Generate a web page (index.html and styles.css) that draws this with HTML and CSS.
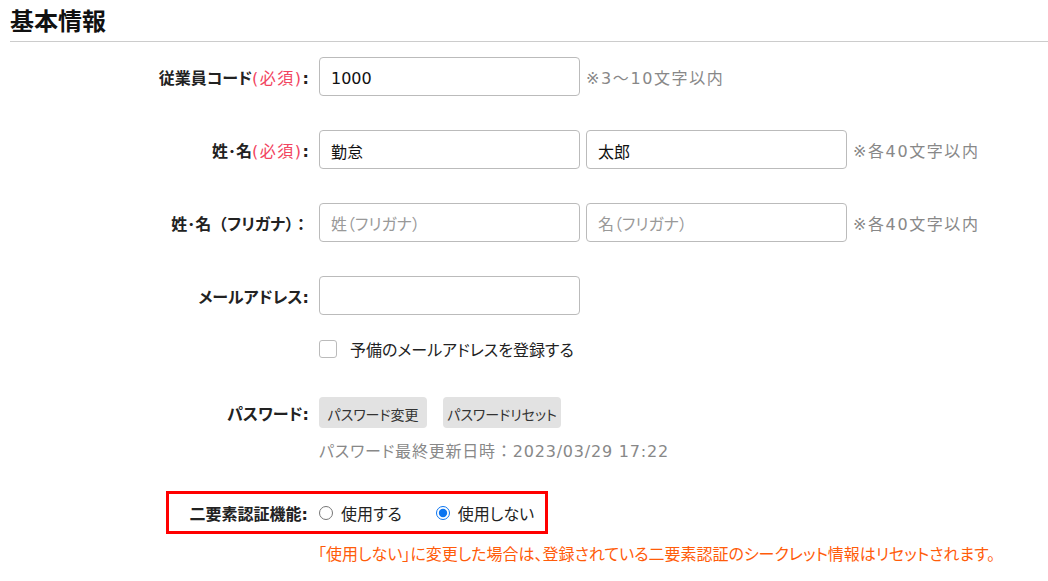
FILE: index.html
```html
<!DOCTYPE html>
<html lang="ja">
<head>
<meta charset="utf-8">
<title>基本情報</title>
<link rel="stylesheet" href="styles.css">
</head>
<body>
<section class="section">
  <h2 class="section-title">基本情報</h2>
  <form class="form">
    <div class="row">
      <label class="label">従業員コード<span class="req">(必須)</span>:</label>
      <input class="text-input" type="text" value="1000">
      <span class="hint">※3〜10文字以内</span>
    </div>
    <div class="row">
      <label class="label">姓･名<span class="req">(必須)</span>:</label>
      <input class="text-input" type="text" value="勤怠">
      <input class="text-input" type="text" value="太郎">
      <span class="hint">※各40文字以内</span>
    </div>
    <div class="row">
      <label class="label">姓･名<span class="full">（</span>フリガナ<span class="full">）：</span></label>
      <input class="text-input" type="text" placeholder="姓（フリガナ）">
      <input class="text-input" type="text" placeholder="名（フリガナ）">
      <span class="hint">※各40文字以内</span>
    </div>
    <div class="row row-email">
      <label class="label">メールアドレス:</label>
      <input class="text-input" type="text">
    </div>
    <div class="row row-check">
      <span class="label"></span>
      <label class="check-label"><input class="checkbox" type="checkbox"><span class="txt">予備のメールアドレスを登録する</span></label>
    </div>
    <div class="row row-password">
      <label class="label">パスワード:</label>
      <button class="btn btn-change" type="button">パスワード変更</button>
      <button class="btn btn-reset" type="button">パスワードリセット</button>
    </div>
    <div class="row row-updated">
      <span class="label"></span>
      <span class="updated">パスワード最終更新日時<span class="full">：</span>2023/03/29 17:22</span>
    </div>
    <div class="row row-2fa">
      <div class="highlight">
        <span class="label label-2fa">二要素認証機能:</span>
        <label class="radio-label"><input class="radio" type="radio" name="tfa"><span class="txt">使用する</span></label>
        <label class="radio-label radio-label-2"><input class="radio" type="radio" name="tfa" checked><span class="txt">使用しない</span></label>
      </div>
    </div>
    <div class="row row-warning">
      <span class="label"></span>
      <span class="warning">「使用しない」に変更した場合は、登録されている二要素認証のシークレット情報はリセットされます。</span>
    </div>
  </form>
</section>
</body>
</html>
```
FILE: styles.css
```css
* { box-sizing: border-box; }
html, body {
  margin: 0;
  padding: 0;
  background: #fff;
}
body {
  font-family: "DejaVu Sans", "Noto Sans CJK JP", sans-serif;
  font-feature-settings: "palt";
  font-size: 16px;
  color: #222;
  overflow: hidden;
}
input, button {
  font-feature-settings: "palt";
}
.full {
  font-feature-settings: normal;
}
.section {
  margin-left: 10px;
}
.section-title {
  margin: 0;
  padding-top: 7px;
  padding-bottom: 4px;
  font-size: 24px;
  line-height: 30px;
  font-weight: bold;
  color: #111;
  border-bottom: 1px solid #ccc;
}
.form {
  padding-top: 15px;
}
.row {
  display: flex;
  align-items: center;
}
.label {
  flex: 0 0 299px;
  width: 299px;
  margin-right: 10px;
  padding-top: 4px;
  text-align: right;
  font-weight: bold;
  line-height: 20px;
}
.req {
  color: #f2455f;
  font-weight: normal;
  letter-spacing: 1.5px;
}
.text-input {
  width: 261px;
  height: 39px;
  margin: 0 6px 34px 0;
  padding: 3px 11px 0;
  border: 1px solid #bbb;
  border-radius: 4px;
  font-family: inherit;
  font-size: 16px;
  color: #111;
  background: #fff;
  outline: none;
}
.text-input::placeholder { color: #999; }
.row .label, .row .hint { margin-bottom: 34px; }
.hint {
  color: #888;
  padding-top: 4px;
  line-height: 20px;
  letter-spacing: 1.6px;
  font-feature-settings: normal;
}
.row-email .text-input { margin-bottom: 25px; }
.row-email .label { margin-bottom: 25px; }
.row-check .label, .row-updated .label, .row-warning .label { margin-bottom: 0; }
.row-check { height: 18px; margin-bottom: 39px; }
.check-label {
  display: flex;
  align-items: center;
  color: #222;
  line-height: 20px;
}
.txt {
  padding-top: 4px;
}
.checkbox {
  appearance: none;
  -webkit-appearance: none;
  width: 18px;
  height: 18px;
  margin: 0 13px 0 0;
  border: 1px solid #bbb;
  border-radius: 3px;
  background: #fff;
}
.row-password { height: 31px; margin-bottom: 10px; }
.row-password .label { margin-bottom: 0; }
.btn {
  height: 31px;
  margin-right: 16px;
  padding: 2px 0 0;
  border: none;
  border-radius: 4px;
  background: #e2e2e2;
  font-family: inherit;
  font-size: 14px;
  color: #333;
  text-align: center;
}
.btn-change { width: 108px; }
.btn-reset { width: 118px; }
.row-updated { height: 24px; margin-bottom: 29px; }
.updated { color: #888; line-height: 24px; padding-top: 4px; letter-spacing: 0.8px; }
.row-2fa { margin-left: 156px; margin-bottom: 7px; }
.highlight {
  display: flex;
  align-items: center;
  height: 43px;
  border: 3px solid #f00;
  padding-right: 11px;
}
.label-2fa {
  flex: 0 0 139px;
  width: 139px;
  margin: 0 11px 0 0 !important;
}
.radio-label {
  display: flex;
  align-items: center;
  line-height: 20px;
  color: #222;
}
.radio-label-2 { margin-left: 34px; }
.radio {
  width: 14px;
  height: 14px;
  margin: 0 8px 0 0;
  accent-color: #0a74f0;
}
.row-warning { height: 24px; }
.warning {
  margin-left: -1px;
  padding-top: 4px;
  color: #ff5c0a;
  line-height: 24px;
  white-space: nowrap;
}
```
